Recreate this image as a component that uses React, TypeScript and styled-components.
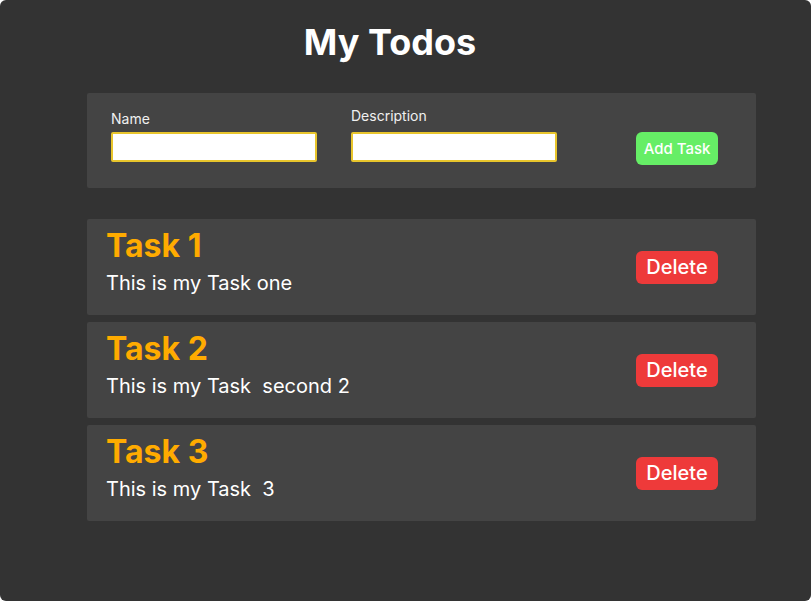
import React from "react";
import styled, { createGlobalStyle } from "styled-components";

const Global = createGlobalStyle`
  html, body { margin: 0; padding: 0; background: #ffffff; }
  body { font-family: Inter, "Noto Sans", sans-serif; }
  * { box-sizing: border-box; }
`;

const Page = styled.div`
  width: 811px;
  height: 601px;
  background: #333333;
  border-radius: 6px;
  overflow: hidden;
  display: flex;
  flex-direction: column;
  align-items: flex-start;
  padding: 0 55px 0 87px;
`;

const Title = styled.h1`
  margin: 0;
  width: 606px;
  padding-top: 21px;
  height: 93px;
  text-align: center;
  font-size: 36px;
  line-height: 42px;
  font-weight: 700;
  color: #ffffff;
`;

const Card = styled.div`
  width: 669px;
  background: #444444;
  border-radius: 2px;
`;

const FormCard = styled(Card)`
  height: 95px;
  display: flex;
  align-items: flex-start;
  padding: 14px 0 0 24px;
  margin-bottom: 31px;
`;

const Field = styled.div<{ $lift?: number }>`
  display: flex;
  flex-direction: column;
  width: 206px;
  margin-right: 34px;
  padding-top: ${(p) => 3 - (p.$lift ?? 0)}px;
`;

const Label = styled.label<{ $gap: number }>`
  font-size: 14px;
  line-height: 17px;
  color: #f0f0f0;
  margin-bottom: ${(p) => p.$gap}px;
`;

const Input = styled.input`
  width: 206px;
  height: 30px;
  border: 2px solid #e8c52c;
  border-radius: 2px;
  background: #ffffff;
  outline: none;
`;

const Button = styled.button<{ $bg: string; $size: number }>`
  background: ${(p) => p.$bg};
  color: #ffffff;
  border: none;
  border-radius: 6px;
  font-family: Inter, "Noto Sans", sans-serif;
  font-size: ${(p) => p.$size}px;
  font-weight: 500;
  width: 82px;
  height: 33px;
  padding: 0;
  cursor: pointer;
`;

const AddButton = styled(Button)`
  margin-top: 25px;
  margin-left: 45px;
`;

const TaskList = styled.div`
  display: flex;
  flex-direction: column;
  gap: 7px;
`;

const TaskCard = styled(Card)`
  height: 96px;
  display: flex;
  align-items: center;
  padding: 0 0 0 19px;
`;

const TaskText = styled.div`
  width: 530px;
  align-self: flex-start;
  display: flex;
  flex-direction: column;
  padding-top: 9px;
`;

const TaskTitle = styled.div`
  font-size: 32px;
  line-height: 36px;
  font-weight: 700;
  color: #ffab00;
`;

const TaskDesc = styled.div`
  font-size: 20px;
  line-height: 24px;
  color: #ffffff;
  white-space: pre;
  margin-top: 7px;
`;

const tasks = [
  { title: "Task 1", desc: "This is my Task one" },
  { title: "Task 2", desc: "This is my Task  second 2" },
  { title: "Task 3", desc: "This is my Task  3" },
];

export default function App() {
  return (
    <>
      <Global />
      <Page>
        <Title>My Todos</Title>
        <FormCard>
          <Field>
            <Label $gap={5}>Name</Label>
            <Input />
          </Field>
          <Field $lift={3}>
            <Label $gap={8}>Description</Label>
            <Input />
          </Field>
          <AddButton $bg="#66ee66" $size={15}>
            Add Task
          </AddButton>
        </FormCard>
        <TaskList>
          {tasks.map((t) => (
            <TaskCard key={t.title}>
              <TaskText>
                <TaskTitle>{t.title}</TaskTitle>
                <TaskDesc>{t.desc}</TaskDesc>
              </TaskText>
              <Button $bg="#ee3a3a" $size={20}>
                Delete
              </Button>
            </TaskCard>
          ))}
        </TaskList>
      </Page>
    </>
  );
}
